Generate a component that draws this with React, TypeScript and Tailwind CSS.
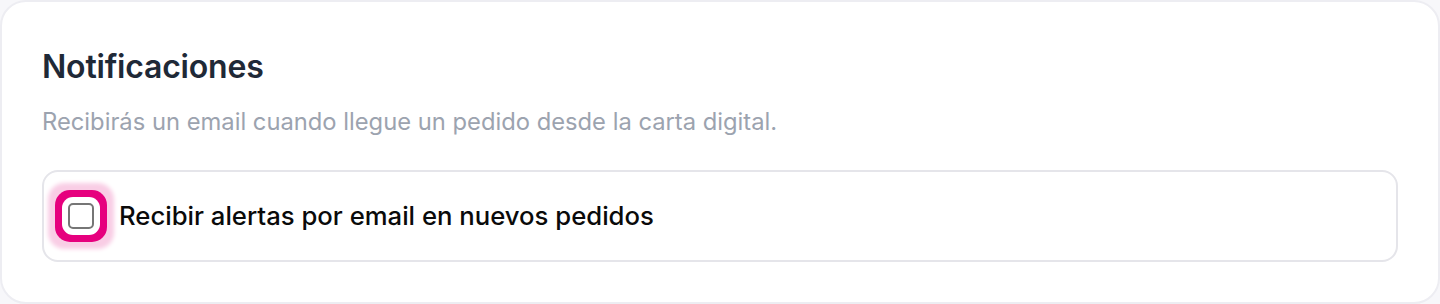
import { useState } from "react";

function AlertCheckbox({ checked, onChange }: { checked: boolean; onChange: () => void }) {
  return (
    <button
      type="button"
      role="checkbox"
      aria-checked={checked}
      onClick={onChange}
      className="flex h-[26px] w-[26px] shrink-0 items-center justify-center rounded-[5px] border-2 border-[#767676] bg-white shadow-[0_0_0_6px_#ffffff,0_0_0_13px_#e6007e,0_0_4px_20px_#f9cde5]"
    >
      {checked && (
        <svg viewBox="0 0 16 16" className="h-4 w-4 text-[#e6007e]" fill="none" stroke="currentColor" strokeWidth={2.5}>
          <path d="M3 8.5l3.2 3L13 4.5" strokeLinecap="round" strokeLinejoin="round" />
        </svg>
      )}
    </button>
  );
}

export default function App() {
  const [alerts, setAlerts] = useState(false);

  return (
    <div className="h-[304px] w-[1440px] bg-[#f7f7fa] font-['Inter',sans-serif]">
      <section className="h-full rounded-[26px] border-2 border-[#ededf2] bg-white px-10 pt-[45px]">
        <h2 className="text-[32px] font-semibold leading-10 tracking-[-0.2px] text-[#1f2937]">Notificaciones</h2>
        <p className="mt-[19px] text-[23.75px] leading-8 text-[#9ca3af]">
          Recibirás un email cuando llegue un pedido desde la carta digital.
        </p>
        <div className="mt-[32px] flex h-[92px] items-center gap-[25px] rounded-[16px] border-2 border-[#e5e5ea] pl-[24px]">
          <AlertCheckbox checked={alerts} onChange={() => setAlerts(!alerts)} />
          <span className="text-[25.7px] font-medium text-[#0a0a0a]">Recibir alertas por email en nuevos pedidos</span>
        </div>
      </section>
    </div>
  );
}
